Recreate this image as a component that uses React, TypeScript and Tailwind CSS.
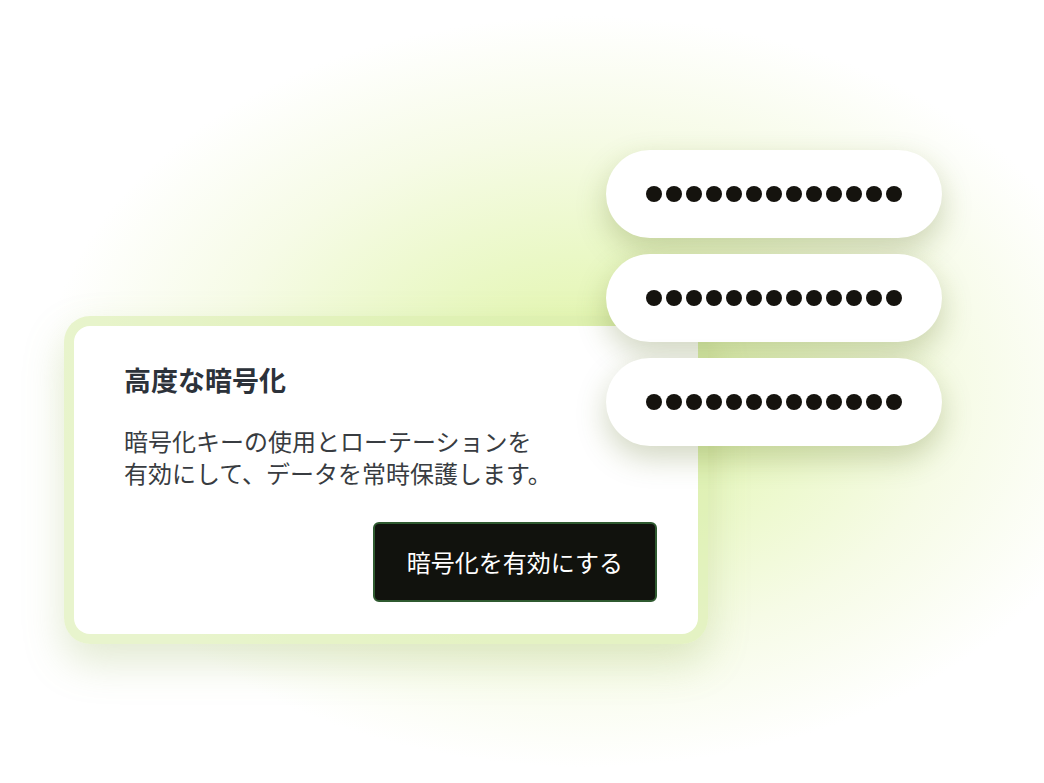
const dots = Array.from({ length: 13 });

function SecretPill() {
  return (
    <div className="flex h-[88px] w-[336px] items-center justify-center gap-1 rounded-full bg-white shadow-[0_12px_30px_rgba(80,100,20,0.26)]">
      {dots.map((_, i) => (
        <span key={i} className="h-4 w-4 rounded-full bg-[#15130e]" />
      ))}
    </div>
  );
}

export default function App() {
  return (
    <div className="relative h-[783px] w-[1044px] overflow-hidden bg-white font-['Noto_Sans_CJK_JP','Noto_Sans',sans-serif]">
      {/* background glow */}
      <div className="absolute inset-0 bg-[radial-gradient(ellipse_52%_48%_at_56%_50%,#e0f4a2_0%,#eaf8c6_36%,#f6fbe6_68%,#ffffff_100%)]" />

      {/* card */}
      <div className="absolute left-[64px] top-[316px] rounded-[26px] bg-[#d8edac]/60 p-[10px] shadow-[0_18px_40px_rgba(150,180,90,0.28)]">
        <div className="flex w-[624px] flex-col rounded-2xl bg-white pb-8 pl-[50px] pr-[41px] pt-9">
          <h2 className="text-[27px] font-bold leading-9 text-[#2c323a]">高度な暗号化</h2>
          <p className="mt-[27px] text-[24px] leading-8 text-[#383c41]">
            暗号化キーの使用とローテーションを
            <br />
            有効にして、データを常時保護します。
          </p>
          <div className="mt-[33px] flex justify-end">
            <button className="h-20 rounded-md border-2 border-[#2f5a30] bg-[#11120d] px-[32px] text-[24px] text-white">
              暗号化を有効にする
            </button>
          </div>
        </div>
      </div>

      {/* masked secrets */}
      <div className="absolute left-[606px] top-[150px] flex flex-col gap-4">
        <SecretPill />
        <SecretPill />
        <SecretPill />
      </div>
    </div>
  );
}
